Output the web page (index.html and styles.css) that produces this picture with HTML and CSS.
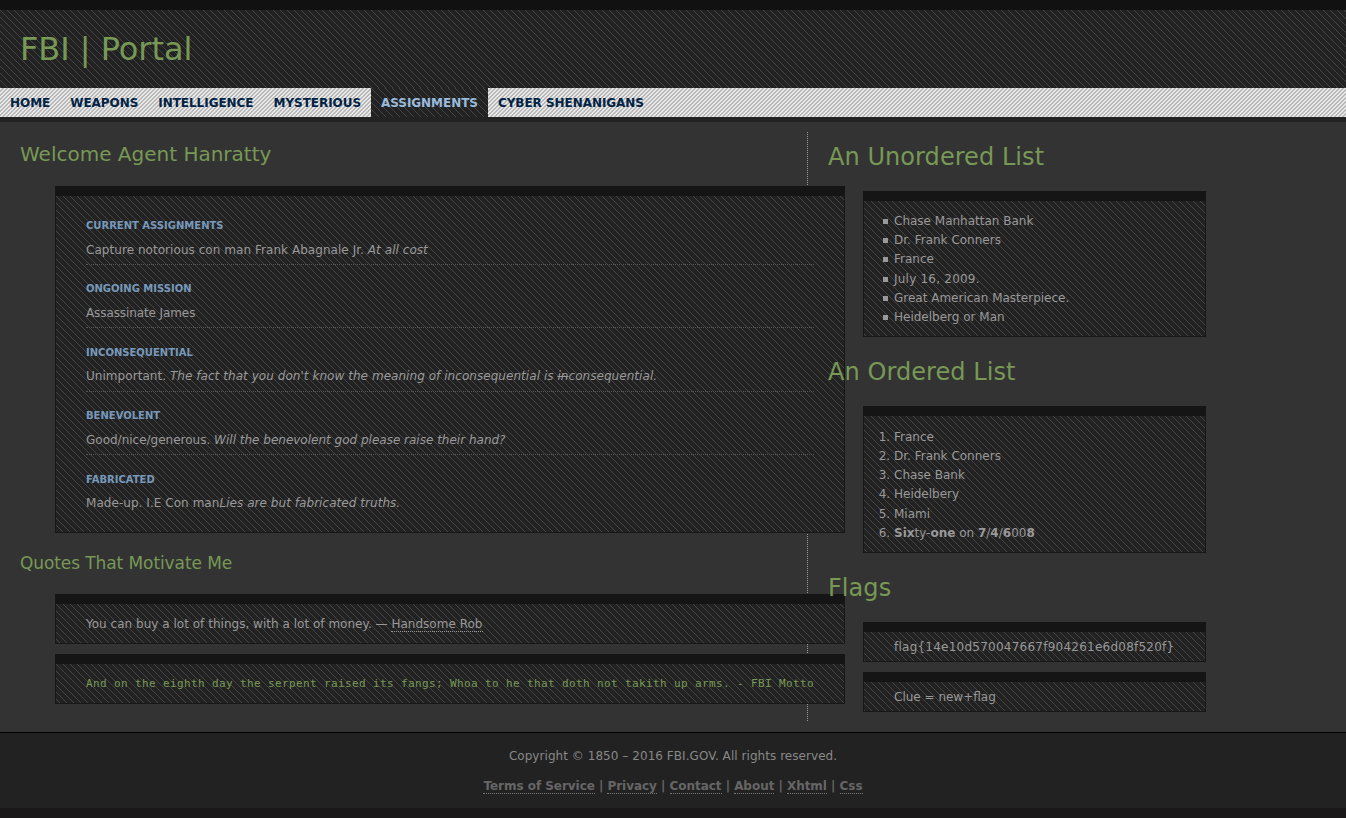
FILE: index.html
```html
<!DOCTYPE html>
<html lang="en">
<head>
<meta charset="utf-8">
<title>FBI | Portal</title>
<link rel="stylesheet" href="styles.css">
</head>
<body>
<header class="banner"><h1>FBI | Portal</h1></header>
<nav class="menu">
<a>Home</a><a>Weapons</a><a>Intelligence</a><a>Mysterious</a><a class="current">Assignments</a><a>Cyber Shenanigans</a>
</nav>
<div class="content">
<main class="primary">
<h2>Welcome Agent Hanratty</h2>
<dl class="panel missions">
<div><dt>Current Assignments</dt><dd class="loose">Capture notorious con man Frank Abagnale Jr. <em>At all cost</em></dd></div>
<div><dt>Ongoing Mission</dt><dd class="tight">Assassinate James</dd></div>
<div><dt>Inconsequential</dt><dd class="loose">Unimportant. <em>The fact that you don't know the meaning of inconsequential is <del>in</del>consequential.</em></dd></div>
<div><dt>Benevolent</dt><dd>Good/nice/generous. <em>Will the benevolent god please raise their hand?</em></dd></div>
<div><dt>Fabricated</dt><dd class="loose">Made-up. I.E Con man<em>Lies are but fabricated truths.</em></dd></div>
</dl>
<h3>Quotes That Motivate Me</h3>
<blockquote class="panel quote">You can buy a lot of things, with a lot of money. — <a>Handsome Rob</a></blockquote>
<pre class="panel quote motto">And on the eighth day the serpent raised its fangs; Whoa to he that doth not takith up arms. - FBI Motto</pre>
</main>
<aside class="secondary">
<h2>An Unordered List</h2>
<ul class="panel list">
<li>Chase Manhattan Bank</li><li>Dr. Frank Conners</li><li>France</li><li class="date">July 16, 2009.</li><li>Great American Masterpiece.</li><li>Heidelberg or Man</li>
</ul>
<h2>An Ordered List</h2>
<ol class="panel list">
<li>France</li><li>Dr. Frank Conners</li><li>Chase Bank</li><li>Heidelbery</li><li>Miami</li><li><b>Six</b>ty-<b>one</b> on <b>7</b>/<b>4</b>/<b>6</b>00<b>8</b></li>
</ol>
<h2>Flags</h2>
<div class="panel flag code">flag{14e10d570047667f904261e6d08f520f}</div>
<div class="panel flag">Clue = new+flag</div>
</aside>
</div>
<footer class="footer">
<p>Copyright © 1850 – 2016 FBI.GOV. All rights reserved.</p>
<p class="links"><a>Terms of Service</a> | <a>Privacy</a> | <a>Contact</a> | <a>About</a> | <a>Xhtml</a> | <a>Css</a></p>
</footer>
</body>
</html>
```
FILE: styles.css
```css
:root {
  --hatch: url("data:image/svg+xml,%3Csvg xmlns='http://www.w3.org/2000/svg' width='7' height='7' shape-rendering='crispEdges'%3E%3Cpath fill='%23444' d='M0 0h1v1H0zM1 1h1v1H1zM2 2h1v1H2zM3 3h1v1H3zM4 4h1v1H4zM5 5h1v1H5zM6 6h1v1H6z'/%3E%3C/svg%3E");
  --light-hatch: url("data:image/svg+xml,%3Csvg xmlns='http://www.w3.org/2000/svg' width='4' height='4' shape-rendering='crispEdges'%3E%3Cpath fill='%23b8b8b8' d='M2 0h2v1H2zM1 1h2v1H1zM0 2h2v1H0zM0 3h1v1H0zM3 3h1v1H3z'/%3E%3C/svg%3E");
}
* { box-sizing: border-box; }
body {
  margin: 0;
  border-top: 10px solid #111;
  border-bottom: 10px solid #1a1818;
  background: #333;
  color: #999;
  font: 12px/19.2px "DejaVu Sans", sans-serif;
}
h1, h2, h3, p { margin: 0; font-weight: normal; }
h1, h2, h3 { color: #795; }
.banner { height: 78px; padding: 20px; background: #222 var(--hatch); }
h1 { font-size: 32px; line-height: 38px; letter-spacing: -.04px; }
.menu {
  display: flex;
  height: 34px;
  border-bottom: 5px solid #222;
  background: #e8e8e8 var(--light-hatch);
}
.menu a { padding: 1px 10px 0; color: #024; font-weight: bold; line-height: 29px; letter-spacing: -.045px; text-transform: uppercase; }
.menu .current { color: #9bd; background: #222 var(--hatch); }
.content { display: flex; height: 610px; padding: 10px 0; }
.primary { width: 808px; height: 589px; padding-left: 20px; border-right: 1px dotted #999; }
.primary h2 { font-size: 20px; line-height: 24px; padding: 10px 0 0; height: 54px; }
.primary h3 { font-size: 17px; line-height: 20px; height: 61px; padding-top: 20px; letter-spacing: -.09px; }
.panel {
  margin: 0 0 10px 35px;
  border: 1px solid #181818;
  border-top: 10px solid #151515;
  background: #222 var(--hatch);
}
.primary .panel { width: 790px; }
.missions { height: 347px; margin-bottom: 0; padding: 20px 30px 0; }
.missions div { height: 63.4px; }
dt { color: #79b; font-size: 10px; font-weight: bold; text-transform: uppercase; }
dd { width: 728px; height: 29.6px; margin: 0; padding-top: 5.4px; border-bottom: 1px dotted #555; }
.loose { letter-spacing: .05px; }
.tight { letter-spacing: -.1px; }
.missions div:last-child dd { border: 0; }
.quote { height: 50px; padding: 11px 30px; letter-spacing: .02px; }
.quote a { border-bottom: 1px dotted #999; }
.motto { padding-top: 10px; color: #795; font: 11px/19px "DejaVu Sans Mono", monospace; letter-spacing: .378px; }
.secondary { flex: 1; padding-left: 20px; }
.secondary h2 { position: relative; height: 59px; padding-top: 11px; font-size: 24px; line-height: 29px; letter-spacing: .06px; }
.secondary .panel { width: 343px; }
.secondary .list { margin-bottom: 10px; padding: 11px 10px 10px 30px; height: 146px; }
.secondary ul { list-style: none; }
ul li::before {
  content: "";
  float: left;
  width: 5px;
  height: 5px;
  margin: 7px 0 0 -11px;
  background: #999;
}
.date { letter-spacing: .22px; }
.secondary ol { height: 147px; padding-top: 12.6px; }
.secondary ol.list { height: 147px; padding-top: 11.6px; }
.secondary ul + h2 + ol.panel { height: 147px; padding-top: 11.8px; }
.secondary ol + h2 { margin-top: 10px; }
.secondary .flag { height: 40px; padding: 6px 30px; }
.secondary .code { letter-spacing: .24px; }
.footer { height: 76px; padding-top: 14px; border-top: 1px solid #000; background: #222; color: #888; text-align: center; letter-spacing: .05px; }
.links { margin-top: 11px; color: #666; font-weight: bold; letter-spacing: -.04px; }
.links a { border-bottom: 1px dotted #777; }
```
